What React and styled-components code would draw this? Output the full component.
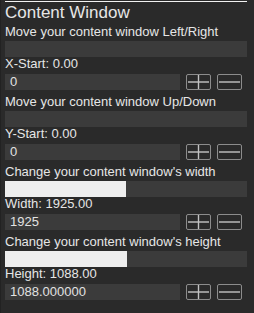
import React from 'react';
import styled, { createGlobalStyle } from 'styled-components';

const GlobalStyle = createGlobalStyle`
  html, body {
    margin: 0;
    padding: 0;
    background: #2a2a2a;
  }
`;

const Panel = styled.div`
  width: 254px;
  height: 313px;
  box-sizing: border-box;
  padding: 1px 7px 0 4px;
  border-left: 1px solid #222;
  background: #2a2a2a;
  font-family: "Liberation Sans", Arial, sans-serif;
  color: #e6e6e6;
  overflow: hidden;
`;

const Rule = styled.div`
  height: 1px;
  background: #f2f2f2;
`;

const Title = styled.div`
  margin-top: 1px;
  font-size: 17px;
  line-height: 20px;
  height: 20px;
`;

const Description = styled.div`
  margin-top: ${p => (p.$first ? 0 : 3)}px;
  font-size: 13px;
  line-height: 18px;
  height: 18px;
  white-space: nowrap;
`;

const Track = styled.div`
  height: 16px;
  background: #3b3b3b;
  display: flex;
`;

const Fill = styled.div`
  height: 100%;
  background: #eeeeee;
`;

const Label = styled.div`
  font-size: 13px;
  line-height: 14px;
  height: 14px;
`;

const InputRow = styled.div`
  margin-top: 3px;
  display: flex;
  align-items: center;
  gap: 6px;
  height: 16px;
`;

const Field = styled.div`
  width: 175px;
  height: 16px;
  box-sizing: border-box;
  padding-left: 5px;
  background: #3b3b3b;
  font-size: 13px;
  line-height: 16px;
  color: #e2e2e2;
`;

const StepButton = styled.div`
  width: 25px;
  height: 16px;
  box-sizing: border-box;
  border: 1px solid #8c8c8c;
  border-radius: 2px;
  display: flex;
  svg {
    display: block;
  }
`;

const PlusIcon = () => (
  <svg width="23" height="14" viewBox="0 0 23 14">
    <line x1="1" y1="7" x2="22" y2="7" stroke="#c4c4c4" strokeWidth="1.4" />
    <line x1="11.5" y1="0" x2="11.5" y2="14" stroke="#c4c4c4" strokeWidth="1.4" />
  </svg>
);

const MinusIcon = () => (
  <svg width="23" height="14" viewBox="0 0 23 14">
    <line x1="1" y1="7" x2="22" y2="7" stroke="#c4c4c4" strokeWidth="1.4" />
  </svg>
);

const sections = [
  { desc: 'Move your content window Left/Right', label: 'X-Start: 0.00', value: '0', fill: 0 },
  { desc: 'Move your content window Up/Down', label: 'Y-Start: 0.00', value: '0', fill: 0 },
  { desc: "Change your content window's width", label: 'Width: 1925.00', value: '1925', fill: 121 },
  { desc: "Change your content window's height", label: 'Height: 1088.00', value: '1088.000000', fill: 122 },
];

const Section = ({ desc, label, value, fill, first }) => (
  <>
    <Description $first={first}>{desc}</Description>
    <Track>{fill > 0 && <Fill style={{ width: fill }} />}</Track>
    <Label>{label}</Label>
    <InputRow>
      <Field>{value}</Field>
      <StepButton><PlusIcon /></StepButton>
      <StepButton><MinusIcon /></StepButton>
    </InputRow>
  </>
);

const App = () => (
  <>
    <GlobalStyle />
    <Panel>
      <Rule />
      <Title>Content Window</Title>
      {sections.map((s, i) => (
        <Section key={s.label} {...s} first={i === 0} />
      ))}
    </Panel>
  </>
);

export default App;
